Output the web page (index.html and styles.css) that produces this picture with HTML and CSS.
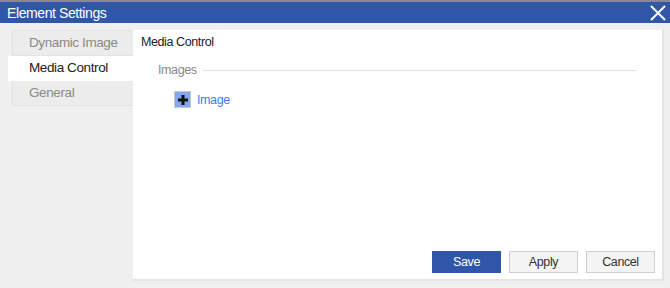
FILE: index.html
```html
<!DOCTYPE html>
<html lang="en">
<head>
  <meta charset="UTF-8" />
  <title>Element Settings</title>
  <link rel="stylesheet" href="styles.css">
</head>
<body>
  <div class="dialog">
    <div class="titlebar">
      <span class="title">Element Settings</span>
      <button class="close" aria-label="Close">
        <svg width="16" height="16" viewBox="0 0 16 16">
          <path d="M1 1 L15 15 M15 1 L1 15" stroke="#fff" stroke-width="2" fill="none"/>
        </svg>
      </button>
    </div>

    <div class="body">
      <div class="tabs">
        <div class="tab">Dynamic Image</div>
        <div class="tab active">Media Control</div>
        <div class="tab">General</div>
      </div>

      <div class="panel">
        <div class="panel-title">Media Control</div>
        <div class="group">
          <div class="legend">
            <span>Images</span>
            <div class="rule"></div>
          </div>
          <div class="add-row">
            <span class="add-btn">
              <svg width="12" height="12" viewBox="0 0 12 12">
                <path d="M6 1 V11 M1 6 H11" stroke="#111" stroke-width="3" fill="none"/>
              </svg>
            </span>
            <a class="add-link" href="#">Image</a>
          </div>
        </div>
        <div class="actions">
          <button class="btn primary">Save</button>
          <button class="btn">Apply</button>
          <button class="btn">Cancel</button>
        </div>
      </div>
    </div>
  </div>
</body>
</html>
```

FILE: styles.css
```css
html, body {
  margin: 0;
  height: 100%;
}

body {
  font-family: "Liberation Sans", Arial, sans-serif;
  letter-spacing: -0.4px;
  background: #8a8a8a;
  padding-top: 2px;
  box-sizing: border-box;
}

.dialog {
  height: 286px;
  background: #efefef;
  display: flex;
  flex-direction: column;
}

.titlebar {
  height: 21px;
  background: #2f56a8;
  display: flex;
  align-items: center;
  justify-content: space-between;
  padding: 0 4px 0 7px;
}

.title {
  color: #fff;
  font-size: 14px;
}

.close {
  background: none;
  border: none;
  padding: 0;
  width: 16px;
  height: 16px;
  display: flex;
}

.body {
  flex: 1;
  display: flex;
  padding: 7px 6px 7px 8px;
}

.tabs {
  width: 125px;
  display: flex;
  flex-direction: column;
}

.tab {
  height: 24px;
  line-height: 24px;
  margin-left: 4px;
  padding-left: 16px;
  font-size: 13.5px;
  color: #8a8a8a;
  background: #ececec;
  border: 1px solid #e2e2e2;
  border-right: none;
}

.tab + .tab {
  border-top: none;
}

.tab.active {
  margin-left: 0;
  padding-left: 20px;
  background: #fff;
  color: #222;
  border-color: #fff;
}

.panel {
  flex: 1;
  background: #fff;
  border-right: 2px solid #e4e4e4;
  border-bottom: 2px solid #e4e4e4;
  display: flex;
  flex-direction: column;
}

.panel-title {
  font-size: 12.5px;
  color: #222;
  padding: 5px 0 0 8px;
}

.group {
  padding: 14px 26px 0 25px;
}

.legend {
  display: flex;
  align-items: center;
  gap: 6px;
  font-size: 12.5px;
  color: #888;
}

.rule {
  flex: 1;
  height: 1px;
  background: #e2e2e2;
}

.add-row {
  display: flex;
  align-items: center;
  gap: 6px;
  margin: 14px 0 0 16px;
}

.add-btn {
  width: 15px;
  height: 15px;
  background: #85a7f2;
  border: 1px solid #c8c8c8;
  display: flex;
  align-items: center;
  justify-content: center;
}

.add-link {
  color: #3f7df0;
  font-size: 12.5px;
  text-decoration: none;
}

.actions {
  margin-top: auto;
  display: flex;
  justify-content: flex-end;
  gap: 8px;
  padding: 0 7px 6px 0;
}

.btn {
  width: 69px;
  height: 22px;
  font-family: inherit;
  font-size: 12.5px;
  letter-spacing: inherit;
  color: #333;
  background: #f4f4f4;
  border: 1px solid #d0d0d0;
  padding: 0;
}

.btn.primary {
  background: #2f56a8;
  border-color: #2f56a8;
  color: #fff;
}
```
